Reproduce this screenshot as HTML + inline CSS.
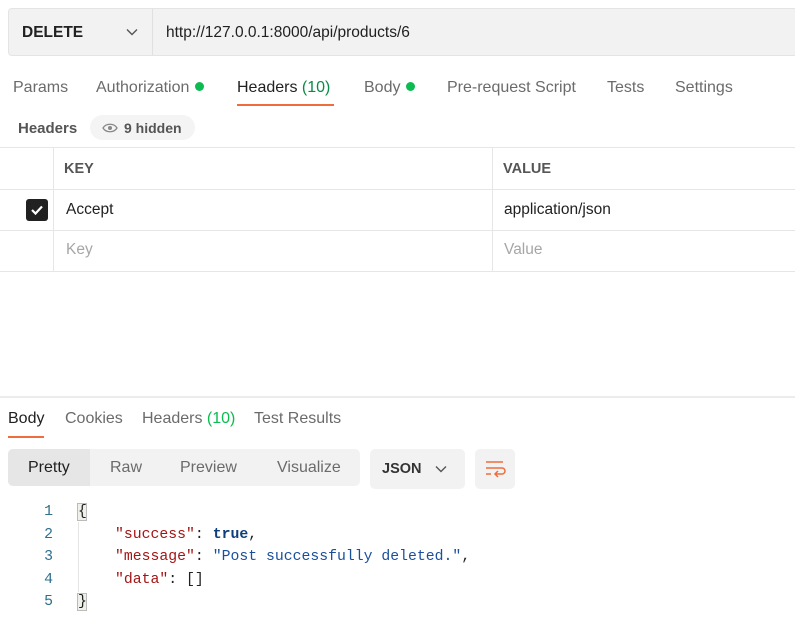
<!DOCTYPE html>
<html><head><style>
*{margin:0;padding:0;box-sizing:border-box}
body{width:795px;height:621px;background:#fff;font-family:"Liberation Sans",sans-serif;color:#212121;position:relative;overflow:hidden;font-size:16px}
.a{position:absolute;white-space:nowrap}
.g{color:#6b6b6b}
.dot{display:inline-block;width:9px;height:9px;border-radius:50%;background:#0cbb52;margin-left:6px;vertical-align:1px}
.mono{font-family:"Liberation Mono",monospace;font-size:14.8px}
.ln{color:#2e6f8e;width:20px;text-align:right}
</style></head><body>
<div class="a" style="left:8px;top:8px;width:800px;height:48px;background:#f2f2f2;border:1px solid #e4e4e4;border-radius:4px"></div>
<div class="a" style="left:152px;top:9px;width:1px;height:46px;background:#e0e0e0"></div>
<div class="a" style="left:22px;top:24px;font-weight:bold;font-size:15.5px">DELETE</div>
<svg class="a" style="left:126px;top:28px" width="12" height="8"><path d="M1 1.5l5 5 5-5" fill="none" stroke="#555" stroke-width="1.4"/></svg>
<div class="a" style="left:166px;top:24px;font-size:15.5px">http://127.0.0.1:8000/api/products/6</div>

<div class="a g" style="left:13px;top:79px">Params</div>
<div class="a g" style="left:96px;top:79px">Authorization<span class="dot"></span></div>
<div class="a" style="left:237px;top:79px">Headers <span style="color:#0c8a48">(10)</span></div>
<div class="a" style="left:237px;top:104px;width:97px;height:2px;background:#ef6c3d"></div>
<div class="a g" style="left:364px;top:79px">Body<span class="dot"></span></div>
<div class="a g" style="left:447px;top:79px">Pre-request Script</div>
<div class="a g" style="left:607px;top:79px">Tests</div>
<div class="a g" style="left:675px;top:79px">Settings</div>

<div class="a" style="left:18px;top:120px;font-weight:bold;color:#555;font-size:15px">Headers</div>
<div class="a" style="left:90px;top:115px;width:105px;height:25px;background:#f4f4f4;border-radius:13px"></div>
<svg class="a" style="left:102px;top:122px" width="16" height="12"><path d="M1 6C4 1 12 1 15 6C12 11 4 11 1 6Z" fill="none" stroke="#888" stroke-width="1.3"/><circle cx="8" cy="6" r="2" fill="#888"/></svg>
<div class="a" style="left:124px;top:120px;font-weight:bold;color:#555;font-size:14px">9 hidden</div>

<div class="a" style="left:0;top:147px;width:795px;height:1px;background:#e6e6e6"></div>
<div class="a" style="left:0;top:189px;width:795px;height:1px;background:#e6e6e6"></div>
<div class="a" style="left:0;top:230px;width:795px;height:1px;background:#e6e6e6"></div>
<div class="a" style="left:0;top:271px;width:795px;height:1px;background:#e6e6e6"></div>
<div class="a" style="left:53px;top:147px;width:1px;height:124px;background:#e6e6e6"></div>
<div class="a" style="left:492px;top:147px;width:1px;height:124px;background:#e6e6e6"></div>
<div class="a" style="left:64px;top:161px;font-weight:bold;color:#555;font-size:14.5px">KEY</div>
<div class="a" style="left:503px;top:161px;font-weight:bold;color:#555;font-size:14.5px">VALUE</div>
<div class="a" style="left:26px;top:199px;width:22px;height:22px;background:#212121;border-radius:3px"></div>
<svg class="a" style="left:29px;top:202px" width="16" height="16"><path d="M3 8l3.5 3.5L13 4.5" fill="none" stroke="#fff" stroke-width="2.2"/></svg>
<div class="a" style="left:66px;top:201px;font-size:15.5px">Accept</div>
<div class="a" style="left:504px;top:201px;font-size:15.5px">application/json</div>
<div class="a" style="left:66px;top:241px;color:#a6a6a6;font-size:15.5px">Key</div>
<div class="a" style="left:504px;top:241px;color:#a6a6a6;font-size:15.5px">Value</div>

<div class="a" style="left:0;top:396px;width:795px;height:2px;background:#ececec"></div>
<div class="a" style="left:8px;top:410px">Body</div>
<div class="a" style="left:8px;top:436px;width:36px;height:2px;background:#ef6c3d"></div>
<div class="a g" style="left:65px;top:410px">Cookies</div>
<div class="a g" style="left:142px;top:410px">Headers <span style="color:#0cbb52">(10)</span></div>
<div class="a g" style="left:254px;top:410px">Test Results</div>

<div class="a" style="left:8px;top:449px;width:352px;height:37px;background:#f2f2f2;border-radius:5px"></div>
<div class="a" style="left:8px;top:449px;width:82px;height:37px;background:#e6e6e6;border-radius:5px 0 0 5px"></div>
<div class="a" style="left:28px;top:459px">Pretty</div>
<div class="a g" style="left:110px;top:459px">Raw</div>
<div class="a g" style="left:180px;top:459px">Preview</div>
<div class="a g" style="left:277px;top:459px">Visualize</div>
<div class="a" style="left:370px;top:449px;width:95px;height:40px;background:#f2f2f2;border-radius:5px"></div>
<div class="a" style="left:382px;top:461px;font-weight:bold;font-size:14.5px;color:#333">JSON</div>
<svg class="a" style="left:435px;top:465px" width="12" height="8"><path d="M1 1.5l5 5 5-5" fill="none" stroke="#555" stroke-width="1.4"/></svg>
<div class="a" style="left:475px;top:449px;width:40px;height:40px;background:#f2f2f2;border-radius:5px"></div>
<svg class="a" style="left:484px;top:459px" width="22" height="20"><path d="M2 3h17M2 9h16a3 3 0 0 1 0 6h-6M14 12l-3 3 3 3M2 15h5" fill="none" stroke="#ef6c3d" stroke-width="1.5"/></svg>

<div class="a" style="left:77px;top:503px;width:10px;height:18px;background:#eef0ea;border:1px solid #bbb"></div>
<div class="a" style="left:77px;top:593px;width:10px;height:18px;background:#eef0ea;border:1px solid #bbb"></div>
<div class="a" style="left:78px;top:522px;width:1px;height:70px;background:#e4e4e4"></div>
<div class="a mono ln" style="left:33px;top:504px">1</div>
<div class="a mono ln" style="left:33px;top:527px">2</div>
<div class="a mono ln" style="left:33px;top:549px">3</div>
<div class="a mono ln" style="left:33px;top:572px">4</div>
<div class="a mono ln" style="left:33px;top:594px">5</div>
<div class="a mono" style="left:78px;top:504px">{</div>
<div class="a mono" style="left:115px;top:527px"><span style="color:#a31515">"success"</span>: <b style="color:#0f3f7a">true</b>,</div>
<div class="a mono" style="left:115px;top:549px"><span style="color:#a31515">"message"</span>: <span style="color:#1a4f9c">"Post successfully deleted."</span>,</div>
<div class="a mono" style="left:115px;top:572px"><span style="color:#a31515">"data"</span>: []</div>
<div class="a mono" style="left:78px;top:594px">}</div>
</body></html>
